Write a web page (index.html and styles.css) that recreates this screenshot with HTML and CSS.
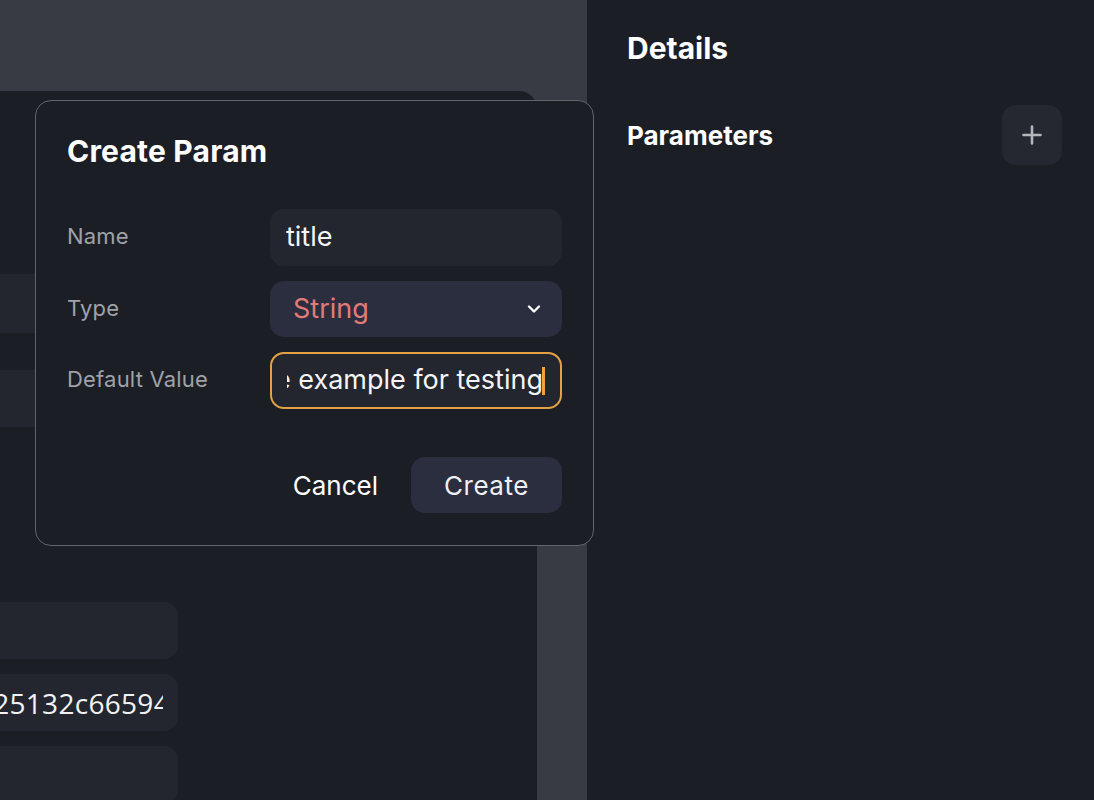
FILE: index.html
```html
<!DOCTYPE html>
<html lang="en">
<head>
<meta charset="utf-8">
<title>Create Param</title>
<link rel="stylesheet" href="styles.css">
</head>
<body>
<div class="app">
  <section class="editor">
    <div class="editor-top"></div>
    <div class="editor-main">
      <div class="canvas">
        <div class="row row-a"></div>
        <div class="row row-b"></div>
        <div class="row row-c"></div>
        <div class="row row-d"><div class="row-clip"><span class="row-text">e25132c66594</span></div></div>
        <div class="row row-e"></div>
      </div>
      <div class="strip"></div>
    </div>

    <div class="modal">
      <h2 class="modal-title">Create Param</h2>
      <div class="form">
        <label class="label">Name</label>
        <div class="field"><span class="field-text">title</span></div>
        <label class="label">Type</label>
        <div class="field select">
          <span class="select-text">String</span>
          <svg class="chevron" width="14" height="10" viewBox="0 0 14 10"><path d="M2 2.5 L7 7.5 L12 2.5" fill="none" stroke="#ffffff" stroke-width="2.4" stroke-linecap="round" stroke-linejoin="round"/></svg>
        </div>
        <label class="label">Default Value</label>
        <div class="field focused"><div class="scroll-clip"><span class="scroll-text">e example for testing</span></div><span class="caret"></span></div>
      </div>
      <div class="actions">
        <button class="btn btn-cancel">Cancel</button>
        <button class="btn btn-create">Create</button>
      </div>
    </div>
  </section>

  <aside class="details">
    <h1 class="details-title">Details</h1>
    <div class="params-head">
      <h2 class="params-title">Parameters</h2>
      <button class="add-btn" aria-label="Add parameter">
        <svg width="24" height="24" viewBox="0 0 24 24"><path d="M12 3.5 V20.5 M3.5 12 H20.5" stroke="#b4b6bc" stroke-width="2.6" stroke-linecap="round"/></svg>
      </button>
    </div>
  </aside>
</div>
</body>
</html>
```

FILE: styles.css
```css
* { box-sizing: border-box; }
html, body {
  margin: 0;
  padding: 0;
  height: 100%;
  background: #1b1e25;
  font-family: Inter, "Noto Sans", sans-serif;
  color: #ffffff;
  overflow: hidden;
}
.app {
  display: flex;
  width: 1094px;
  height: 800px;
}
.editor {
  position: relative;
  width: 587px;
  flex: none;
  display: flex;
  flex-direction: column;
  background: #383a44;
}
.editor-top {
  height: 91px;
  flex: none;
}
.editor-main {
  flex: 1;
  display: flex;
}
.canvas {
  width: 537px;
  background: #1b1e25;
  border-top-right-radius: 18px;
  display: flex;
  flex-direction: column;
  padding-top: 183px;
  overflow: hidden;
}
.strip {
  flex: 1;
}
.row {
  width: 178px;
  height: 57px;
  background: #23262e;
  border-radius: 0 14px 14px 0;
  flex: none;
  display: flex;
  align-items: center;
  padding-right: 15px;
}
.row-a { height: 59px; }
.row-b { margin-top: 37px; }
.row-c { margin-top: 175px; }
.row-d { margin-top: 15px; }
.row-e { margin-top: 15px; }
.row-clip {
  flex: 1;
  height: 100%;
  display: flex;
  align-items: center;
  justify-content: flex-end;
  overflow: hidden;
}
.row-text {
  flex: none;
  font-family: "Open Sans", sans-serif;
  font-size: 28px;
  white-space: nowrap;
  color: #f2f2f4;
  letter-spacing: 0.3px;
  margin-right: -7px;
}

.modal {
  position: absolute;
  left: 35px;
  top: 100px;
  width: 559px;
  height: 446px;
  background: #1b1e25;
  border: 1.5px solid #61646b;
  border-radius: 16px;
  padding: 31px;
  display: flex;
  flex-direction: column;
}
.modal-title {
  margin: 0;
  font-size: 30px;
  font-weight: 700;
  line-height: 38px;
  letter-spacing: 0.2px;
}
.form {
  margin-top: 39px;
  display: grid;
  grid-template-columns: 203px 292px;
  row-gap: 15px;
  align-items: center;
}
.label {
  font-size: 22px;
  color: #a0a2a8;
  font-weight: 400;
  letter-spacing: 0.2px;
  margin-top: -3px;
}
.field {
  height: 57px;
  border-radius: 14px;
  background: #23262e;
  display: flex;
  align-items: center;
  padding: 0 16px 3px;
  font-size: 27px;
  white-space: nowrap;
  overflow: hidden;
}
.field-text { color: #f4f4f6; }
.select {
  height: 56px;
  background: #2a2e3f;
  padding: 0 23px 2px;
  justify-content: space-between;
}
.select-text { color: #e27b78; }
.chevron { margin-right: -2px; margin-top: 2px; }
.focused {
  border: 2px solid #e3a244;
  padding: 0 15px 0 15px;
}
.scroll-clip {
  flex: 1;
  min-width: 0;
  display: flex;
  justify-content: flex-end;
  overflow: hidden;
}
.scroll-text {
  color: #f4f4f6;
  flex: none;
  margin-top: -3px;
}
.caret {
  flex: none;
  width: 3px;
  height: 28px;
  background: #f0a23c;
  margin-left: -1px;
}
.actions {
  margin-top: 48px;
  display: flex;
  justify-content: flex-end;
  align-items: center;
}
.btn {
  font-family: Inter, "Noto Sans", sans-serif;
  font-size: 26px;
  color: #ffffff;
  border: none;
  background: transparent;
  height: 56px;
  border-radius: 14px;
  cursor: pointer;
}
.btn-cancel {
  padding: 0 33px 0 16px;
}
.btn-create {
  width: 151px;
  background: #2a2e3f;
  color: #eef0f4;
  letter-spacing: 0.5px;
}

.details {
  flex: 1;
  background: #1b1e25;
  padding: 28px 32px 0 40px;
}
.details-title {
  margin: 0;
  font-size: 30px;
  font-weight: 700;
  line-height: 40px;
}
.params-head {
  margin-top: 37px;
  display: flex;
  align-items: center;
  justify-content: space-between;
}
.params-title {
  margin: 0;
  font-size: 26px;
  font-weight: 700;
}
.add-btn {
  width: 60px;
  height: 60px;
  border: none;
  border-radius: 14px;
  background: #252830;
  display: flex;
  align-items: center;
  justify-content: center;
  padding: 0;
}
```
